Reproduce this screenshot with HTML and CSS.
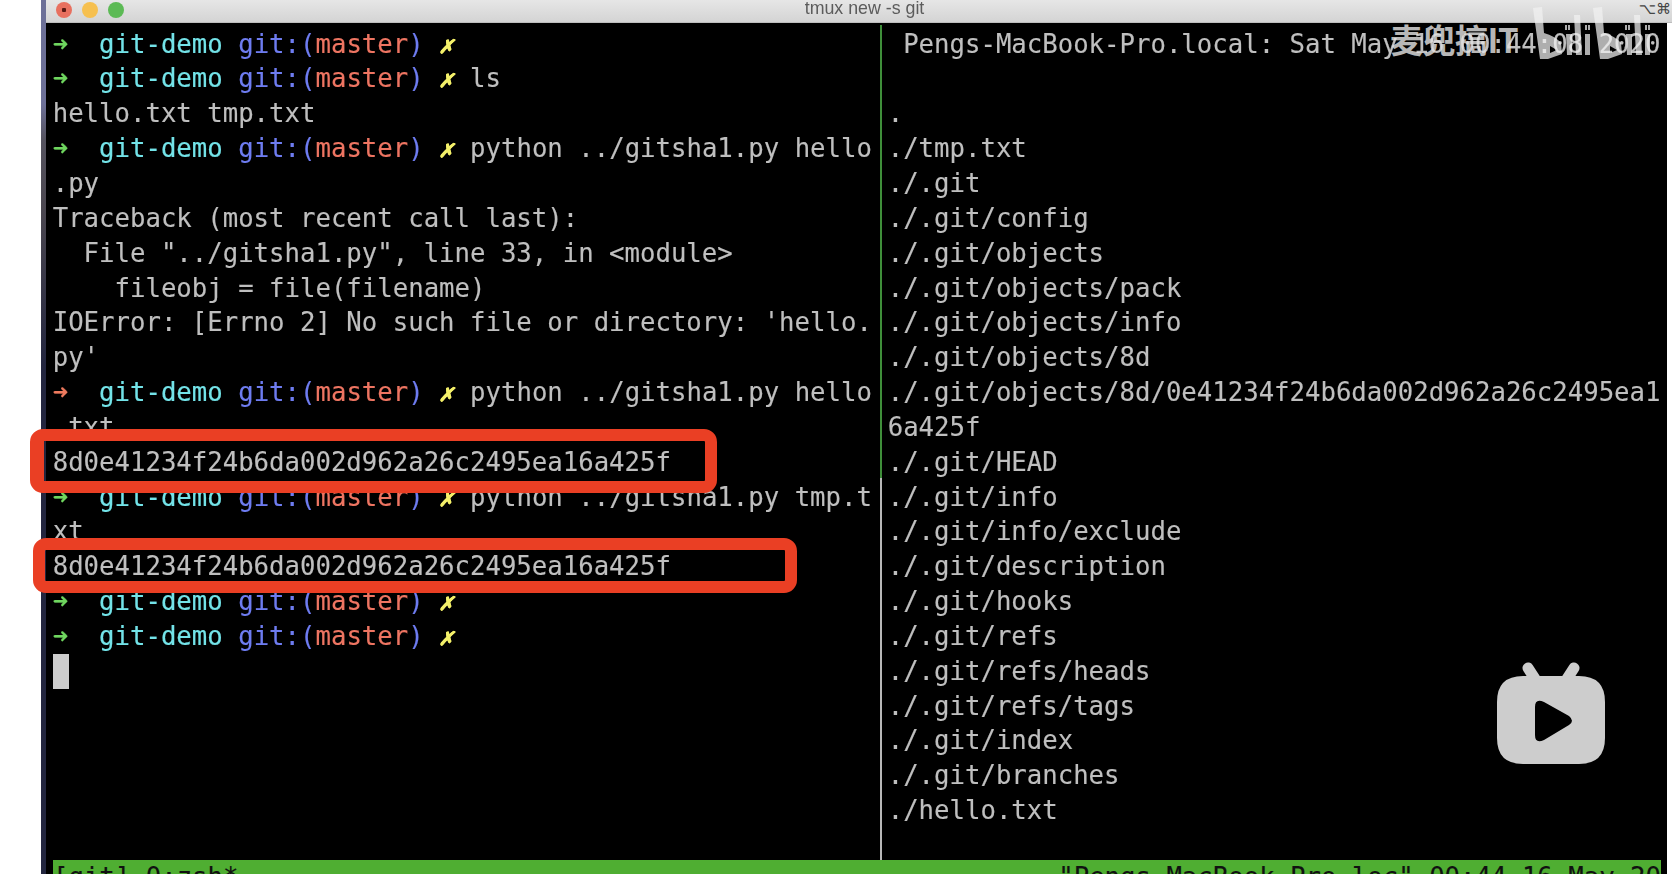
FILE: index.html
```html
<!DOCTYPE html>
<html lang="en">
<head>
<meta charset="utf-8">
<title>tmux new -s git</title>
<link rel="stylesheet" href="styles.css">
</head>
<body>
<main class="window">
  <header class="titlebar">
    <div class="lights"><i class="light red"></i><i class="light yellow"></i><i class="light green"></i></div>
    <div class="title">tmux new -s git</div>
    <div class="keys">⌥⌘</div>
  </header>
  <section class="terminal">
    <div class="panes">
      <div class="pane left">
        <div class="line"><span class="ar">➜</span>  <span class="cy">git-demo</span> <span class="bl">git:(</span><span class="rd">master</span><span class="bl">)</span> <span class="ye">✗</span></div>
        <div class="line"><span class="ar">➜</span>  <span class="cy">git-demo</span> <span class="bl">git:(</span><span class="rd">master</span><span class="bl">)</span> <span class="ye">✗</span> ls</div>
        <div class="line">hello.txt tmp.txt</div>
        <div class="line"><span class="ar">➜</span>  <span class="cy">git-demo</span> <span class="bl">git:(</span><span class="rd">master</span><span class="bl">)</span> <span class="ye">✗</span> python ../gitsha1.py hello</div>
        <div class="line">.py</div>
        <div class="line">Traceback (most recent call last):</div>
        <div class="line">  File "../gitsha1.py", line 33, in &lt;module&gt;</div>
        <div class="line">    fileobj = file(filename)</div>
        <div class="line">IOError: [Errno 2] No such file or directory: 'hello.</div>
        <div class="line">py'</div>
        <div class="line"><span class="ar err">➜</span>  <span class="cy">git-demo</span> <span class="bl">git:(</span><span class="rd">master</span><span class="bl">)</span> <span class="ye">✗</span> python ../gitsha1.py hello</div>
        <div class="line">.txt</div>
        <div class="line">8d0e41234f24b6da002d962a26c2495ea16a425f</div>
        <div class="line"><span class="ar">➜</span>  <span class="cy">git-demo</span> <span class="bl">git:(</span><span class="rd">master</span><span class="bl">)</span> <span class="ye">✗</span> python ../gitsha1.py tmp.t</div>
        <div class="line">xt</div>
        <div class="line">8d0e41234f24b6da002d962a26c2495ea16a425f</div>
        <div class="line"><span class="ar">➜</span>  <span class="cy">git-demo</span> <span class="bl">git:(</span><span class="rd">master</span><span class="bl">)</span> <span class="ye">✗</span></div>
        <div class="line"><span class="ar">➜</span>  <span class="cy">git-demo</span> <span class="bl">git:(</span><span class="rd">master</span><span class="bl">)</span> <span class="ye">✗</span></div>
        <div class="line"><span class="cursor"></span></div>
      </div>
      <div class="divider"><i class="seg-active"></i><i class="seg-idle"></i></div>
      <div class="pane right">
        <div class="line"> Pengs-MacBook-Pro.local: Sat May 16 00:44:08 2020</div>
        <div class="line"> </div>
        <div class="line">.</div>
        <div class="line">./tmp.txt</div>
        <div class="line">./.git</div>
        <div class="line">./.git/config</div>
        <div class="line">./.git/objects</div>
        <div class="line">./.git/objects/pack</div>
        <div class="line">./.git/objects/info</div>
        <div class="line">./.git/objects/8d</div>
        <div class="line">./.git/objects/8d/0e41234f24b6da002d962a26c2495ea1</div>
        <div class="line">6a425f</div>
        <div class="line">./.git/HEAD</div>
        <div class="line">./.git/info</div>
        <div class="line">./.git/info/exclude</div>
        <div class="line">./.git/description</div>
        <div class="line">./.git/hooks</div>
        <div class="line">./.git/refs</div>
        <div class="line">./.git/refs/heads</div>
        <div class="line">./.git/refs/tags</div>
        <div class="line">./.git/index</div>
        <div class="line">./.git/branches</div>
        <div class="line">./hello.txt</div>
      </div>
    </div>
    <footer class="status">
      <span>[git] 0:zsh*</span>
      <span>"Pengs-MacBook-Pro.loc" 00:44 16-May-20</span>
    </footer>
  </section>
</main>

<div class="mark mark-one"></div>
<div class="mark mark-two"></div>

<div class="wm-text">麦兜搞IT</div>
<svg class="wm-logo" viewBox="0 0 147 70" aria-hidden="true">
  <g fill="#f2f2f2">
    <path fill-rule="evenodd" d="M8 8 L17 7 L19 33 Q30 36 36 43 L37 54 L23 59 L15 59 Z M25 46 L32 50 L25 53 Z"/>
    <path d="M40 25 h2 v5 h-2 Z M43 25 h2 v5 h-2 Z M60 25 h2 v5 h-2 Z M63 25 h2 v5 h-2 Z"/>
    <path d="M41 34 h6 v21 h-5 Z M60 34 h5 v21 h-5 Z M49 15 h6 l2 40 h-6 Z"/>
    <path fill-rule="evenodd" d="M68 8 L77 7 L79 33 Q90 36 96 43 L97 54 L83 59 L75 59 Z M85 46 L92 50 L85 53 Z"/>
    <path d="M100 25 h2 v5 h-2 Z M103 25 h2 v5 h-2 Z M120 25 h2 v5 h-2 Z M123 25 h2 v5 h-2 Z"/>
    <path d="M101 34 h6 v21 h-5 Z M120 34 h5 v21 h-5 Z M109 15 h6 l2 40 h-6 Z"/>
  </g>
</svg>

<svg class="tv" viewBox="0 0 108 103" aria-hidden="true">
  <path d="M31 7 L42 24 M77 7 L66 24" fill="none" stroke="#cdcdcd" stroke-width="11" stroke-linecap="round"/>
  <path fill-rule="evenodd" fill="#cdcdcd" d="M26 15 H82 Q108 15 108 41 V77 Q108 103 82 103 H26 Q0 103 0 77 V41 Q0 15 26 15 Z M38 46 Q38 37 47 41 L72 55 Q78 60 72 64 L47 79 Q38 83 38 74 Z"/>
</svg>
</body>
</html>
```
FILE: styles.css
```css
* { box-sizing: border-box; }
html, body { margin: 0; height: 100%; background: #fff; overflow: hidden; }
body { display: flex; height: 874px; padding: 0 5px 0 41px; }

.window {
  flex: 1;
  display: flex;
  flex-direction: column;
  height: 874px;
  border-left: 5px solid #23263f;
  border-image: linear-gradient(#6d7098 0, #6d7098 12%, #55535f 16%, #4b4750 24%, #23263f 42%, #23263f 100%) 1;
}

.titlebar {
  flex: none;
  display: grid;
  grid-template-columns: 1fr auto 1fr;
  align-items: center;
  height: 23px;
  margin-right: -5px;
  padding: 0 1px 0 10px;
  background: linear-gradient(#e6e6e6, #d4d4d4);
  border-bottom: 1px solid #bdbdbd;
}
.lights { display: flex; gap: 10px; margin-top: -3px; }
.light { width: 16px; height: 16px; border-radius: 50%; }
.red { background: radial-gradient(circle, #5a1a14 0 2px, #e8705f 2.5px); }
.yellow { background: #f6c050; }
.green { background: #5cba55; }
.title { font: 17.8px/20px "Liberation Sans", sans-serif; color: #5c5c5c; margin-top: -6px; margin-left: 2px; filter: blur(.3px); }
.keys { justify-self: end; font: 15px/16px "DejaVu Sans", sans-serif; color: #444; margin-top: -5px; }

.terminal {
  flex: 1;
  display: flex;
  flex-direction: column;
  min-height: 0;
  background: #000;
  font-family: "DejaVu Sans Mono", monospace;
  font-size: 25.68px;
  line-height: 34.85px;
  color: #bfbfbf;
  -webkit-text-stroke: .15px currentColor;
}
.panes { flex: none; display: flex; height: 837px; }
.pane { padding-top: 3.6px; filter: blur(.35px); overflow: hidden; }
.left { width: 834px; padding-left: 6.7px; }
.right { flex: 1; padding-left: 6.2px; }
.line { height: 34.85px; white-space: pre; }

.divider { flex: none; display: flex; flex-direction: column; width: 1.5px; padding-top: 2px; }
.seg-active { flex: none; height: 453px; background: #3f8f3a; }
.seg-idle { flex: 1; background: #b8b8b8; }

.ar { color: #6fd65f; font-weight: bold; }
.err { color: #ee7a5e; }
.cy { color: #73e3e8; }
.bl { color: #6e7cf0; }
.rd { color: #ee7562; }
.ye { display: inline-block; width: 15.46px; font-size: 23px; color: #f4f06a; font-weight: bold; font-style: italic; }
.cursor { display: block; width: 16px; height: 34.85px; background: #cdcdcd; }

.status {
  flex: none;
  display: flex;
  justify-content: space-between;
  height: 14px;
  margin: 0 6px 0 7px;
  background: #4fae32;
  color: #111;
  overflow: hidden;
  white-space: pre;
}

/* Annotations and video-player overlays sit on top of the recording */
.mark { position: absolute; border: solid #ea3f24; border-radius: 13px; }
.mark-one { left: 30px; top: 429px; width: 687px; height: 64px; border-width: 12px 12px 12px 14px; }
.mark-two { left: 33px; top: 538px; width: 764px; height: 55px; border-width: 12px; }

.wm-text {
  position: absolute;
  left: 1390px;
  top: 18px;
  font: bold 33px/42px "Noto Sans CJK SC", sans-serif;
  color: rgba(226, 226, 226, .82);
  white-space: nowrap;
  letter-spacing: -.5px;
}
.wm-logo { position: absolute; left: 1525px; top: 0; width: 147px; height: 70px; opacity: .72; }
.tv { position: absolute; left: 1497px; top: 661px; width: 108px; height: 103px; }
```
